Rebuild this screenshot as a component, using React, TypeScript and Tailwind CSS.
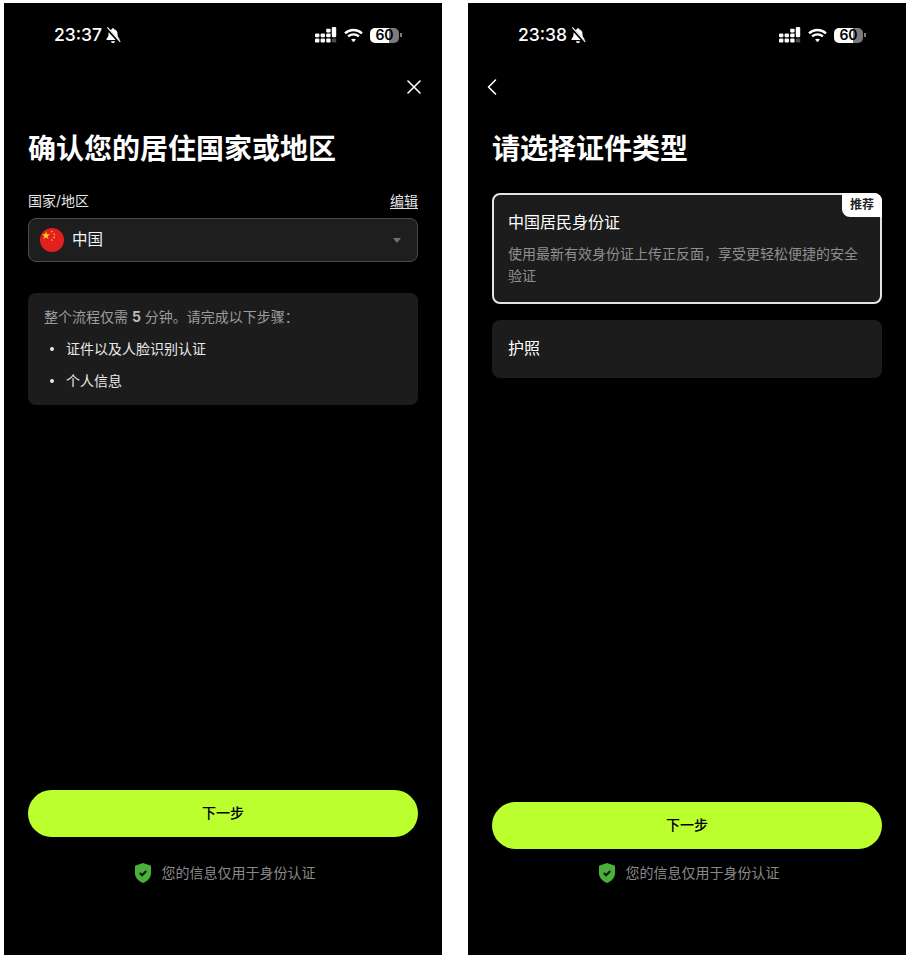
import React from 'react';
import { X, ChevronLeft } from 'lucide-react';

const FONT = 'font-[Inter,"Noto_Sans_CJK_SC",sans-serif]';

const MutedBell = () => (
  <svg width="16" height="17" viewBox="0 0 16 17" className="shrink-0">
    <path
      d="M8 1.200c.7 0 1.200.5 1.200 1.100 2.200.6 3.300 2.400 3.300 4.700 0 2.300.7 3.500 1.900 4.700.4.500.2 1.300-.6 1.300H2.200c-.8 0-1-.8-.6-1.300C2.800 10.500 3.500 9.300 3.500 7c0-2.300 1.100-4.100 3.300-4.700 0-.6.5-1.100 1.200-1.100Z"
      fill="#fff"
    />
    <path d="M6 14.300h4c0 1-.9 1.800-2 1.800s-2-.8-2-1.800Z" fill="#fff" />
    <path d="M1.500 0.800 15 15.800" stroke="#000" strokeWidth="2.600" />
    <path d="M2.300 0.300 15.300 14.800" stroke="#fff" strokeWidth="1.100" />
  </svg>
);

const SignalIcon = () => (
  <svg width="22" height="16" viewBox="0 0 22 16" fill="#fff">
    {[0, 5.6, 11.2].map((x) => (
      <g key={x}>
        <rect x={x} y="11.600" width="4.400" height="3.800" rx="1" />
        <rect x={x} y="6.400" width="4.400" height="3.800" rx="1" />
      </g>
    ))}
    <rect x="11.200" y="1.800" width="4.400" height="3.800" rx="1" />
    <rect x="16.800" y="0" width="4.400" height="10.200" rx="1.200" />
    <rect x="16.800" y="11.600" width="4.400" height="3.800" rx="1" fill="#4a4a4a" />
  </svg>
);

const WifiIcon = () => (
  <svg width="19" height="15" viewBox="0 0 18 14" fill="none" stroke="#fff" strokeWidth="2.300">
    <path d="M1 4.900C5.500.7 12.500.7 17 4.900" />
    <path d="M3.900 7.900c2.900-2.600 7.300-2.600 10.200 0" />
    <path d="M9 13.400 6.700 10.900c1.300-1.100 3.300-1.100 4.600 0Z" fill="#fff" stroke="none" />
  </svg>
);

const Battery = () => (
  <div className="flex items-center gap-[1px]">
    <div className="w-[29px] h-[15px] rounded-[5px] bg-[linear-gradient(90deg,#fff_0%,#fff_66%,#7b7b7b_66%,#7b7b7b_100%)] flex items-center justify-center text-[14px] leading-none font-semibold text-black font-[Inter,sans-serif]">
      60
    </div>
    <div className="w-[2px] h-[4px] bg-[#7b7b7b]" />
  </div>
);

const StatusBar = ({ time }: { time: string }) => (
  <div className="h-[64px] pl-[50px] pr-[40px] flex items-center justify-between text-white">
    <div className="flex items-center gap-[3px]">
      <span className="text-[17.5px] leading-none font-medium font-[Inter,sans-serif]">{time}</span>
      <MutedBell />
    </div>
    <div className="flex items-center gap-[7px]">
      <SignalIcon />
      <WifiIcon />
      <Battery />
    </div>
  </div>
);

const ChinaFlag = () => (
  <svg width="24" height="24" viewBox="0 0 24 24" className="shrink-0">
    <circle cx="12" cy="12" r="12" fill="#e32020" />
    <polygon
      points="6,3.400 7,6.300 10,6.300 7.600,8.100 8.500,11 6,9.200 3.500,11 4.400,8.100 2,6.300 5,6.300"
      fill="#ffd21f"
    />
    <circle cx="11.800" cy="3.600" r="0.800" fill="#ffd21f" />
    <circle cx="14.200" cy="6.200" r="0.800" fill="#ffd21f" />
    <circle cx="14.200" cy="9.400" r="0.800" fill="#ffd21f" />
    <circle cx="11.800" cy="12" r="0.800" fill="#ffd21f" />
  </svg>
);

const ShieldIcon = () => (
  <svg width="16" height="20" viewBox="0 0 16 20" className="shrink-0">
    <path d="M8 0 16 2.800V10c0 4.800-3.200 8.200-8 10-4.800-1.800-8-5.200-8-10V2.800Z" fill="#4caf3a" />
    <path d="m4.800 10 2.300 2.300 4.100-4.300" fill="none" stroke="#0b1a08" strokeWidth="2" />
  </svg>
);

const Footer = ({ noteGap }: { noteGap: string }) => (
  <div className="px-6 pb-[72px]">
    <button className="w-full h-[47px] pb-[2px] rounded-full bg-[#bcff2f] text-black text-[14px] font-medium flex items-center justify-center">
      下一步
    </button>
    <div className={`${noteGap} h-[20px] flex items-center justify-center gap-[11px] pl-[4px] text-[14px] text-[#8a8a8a]`}>
      <ShieldIcon />
      <span className="pb-[2px]">您的信息仅用于身份认证</span>
    </div>
  </div>
);

const Title = ({ children }: { children: React.ReactNode }) => (
  <h1 className="mt-6 h-[36px] px-6 flex items-center text-[28px] leading-none font-semibold text-white">{children}</h1>
);

const ResidencePhone = () => (
  <div className="w-[438px] h-[952px] bg-black flex flex-col">
    <StatusBar time="23:37" />
    <div className="h-[40px] px-4 flex items-center justify-end text-white">
      <X size={24} strokeWidth={1.6} />
    </div>
    <Title>确认您的居住国家或地区</Title>

    <div className="flex-1 px-6 mt-6">
      <div className="h-[20px] pb-[2px] flex items-center justify-between text-[14px] text-[#e5e5e5]">
        <span>国家/地区</span>
        <span className="underline underline-offset-2">编辑</span>
      </div>
      <div className="mt-[7px] h-[44px] px-[11px] rounded-lg bg-[#1e1e1e] border border-[#4a4a4a] flex items-center justify-between">
        <div className="flex items-center gap-[8px] text-[15.5px] text-[#f2f2f2]">
          <ChinaFlag />
          <span>中国</span>
        </div>
        <div className="mr-[5px] w-0 h-0 border-x-[4px] border-x-transparent border-t-[5px] border-t-[#6f6f76]" />
      </div>

      <div className="mt-[31px] h-[112px] px-4 pt-[14px] rounded-lg bg-[#1c1c1c] text-[14px]">
        <p className="h-[20px] leading-[20px] text-[#9c9c9c]">
          整个流程仅需 <span className="font-bold text-[#bdbdbd]">5</span> 分钟。请完成以下步骤：
        </p>
        <ul className="mt-[12px] flex flex-col gap-[12px] text-[#e8e8e8]">
          {['证件以及人脸识别认证', '个人信息'].map((step) => (
            <li key={step} className="h-[20px] leading-[20px] flex items-center gap-[12px] pl-[6px]">
              <span className="w-[4px] h-[4px] rounded-full bg-[#e8e8e8] shrink-0" />
              {step}
            </li>
          ))}
        </ul>
      </div>
    </div>

    <Footer noteGap="mt-[26px]" />
  </div>
);

const DocumentPhone = () => (
  <div className="w-[438px] h-[952px] bg-black flex flex-col">
    <StatusBar time="23:38" />
    <div className="h-[40px] pl-[10px] flex items-center text-white">
      <ChevronLeft size={28} strokeWidth={1.4} />
    </div>
    <Title>请选择证件类型</Title>

    <div className="flex-1 px-6 mt-[26px]">
      <div className="relative h-[111px] px-[14px] pt-[15px] rounded-lg bg-[#1c1c1c] border-2 border-[#e4e4e4]">
        <div className="absolute -top-[2px] -right-[2px] w-[40px] h-[24px] rounded-tr-lg rounded-bl-lg bg-white flex items-center justify-center text-[12px] font-bold text-[#222]">
          推荐
        </div>
        <p className="h-[24px] leading-[24px] text-[16px] text-white">中国居民身份证</p>
        <p className="mt-[9px] text-[14px] leading-[22px] text-[#8f8f8f]">
          使用最新有效身份证上传正反面，享受更轻松便捷的安全验证
        </p>
      </div>
      <div className="mt-[16px] h-[58px] px-4 pb-[2px] rounded-lg bg-[#1c1c1c] flex items-center text-[16px] text-white">
        护照
      </div>
    </div>

    <Footer noteGap="mt-[14px]" />
  </div>
);

export default function App() {
  return (
    <div className={`w-[911px] h-[960px] bg-white pl-[4px] pt-[3px] flex gap-[26px] ${FONT}`}>
      <ResidencePhone />
      <DocumentPhone />
    </div>
  );
}
